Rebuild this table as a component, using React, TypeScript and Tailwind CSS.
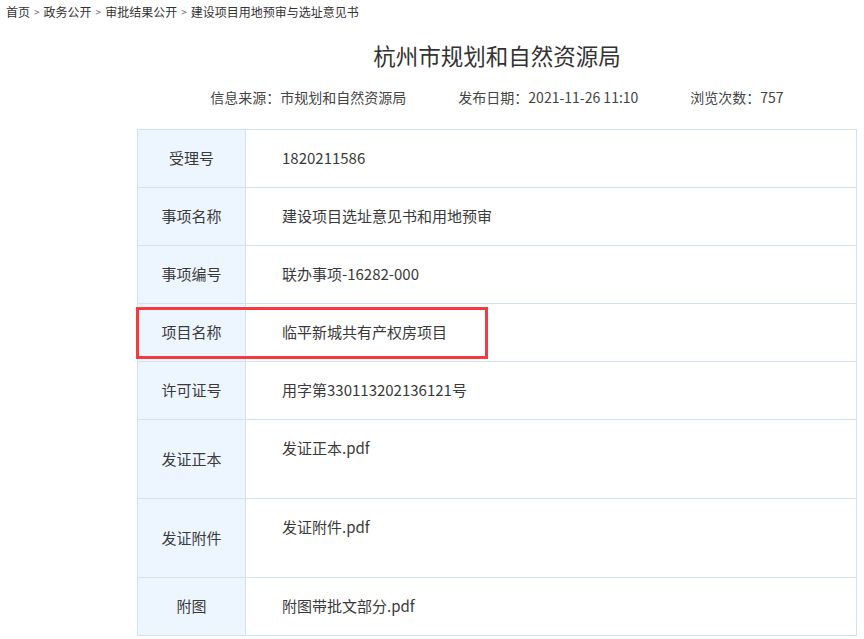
import React from "react";

const font = { fontFamily: '"Microsoft YaHei", "Noto Sans CJK SC", "Noto Sans", sans-serif' };

type Row = { label: string; value: string; tall?: boolean };

const rows: Row[] = [
  { label: "受理号", value: "1820211586" },
  { label: "事项名称", value: "建设项目选址意见书和用地预审" },
  { label: "事项编号", value: "联办事项-16282-000" },
  { label: "项目名称", value: "临平新城共有产权房项目" },
  { label: "许可证号", value: "用字第330113202136121号" },
  { label: "发证正本", value: "发证正本.pdf", tall: true },
  { label: "发证附件", value: "发证附件.pdf", tall: true },
  { label: "附图", value: "附图带批文部分.pdf" },
];

export default function App() {
  return (
    <div className="w-[864px] h-[639px] bg-white overflow-hidden text-[#333]" style={font}>
      <div className="pl-[6px] h-[24px] leading-[24px] text-[12px] text-[#333] flex items-center gap-[4px]">
        <span>首页</span>
        <span className="text-[10px] text-[#666]">&gt;</span>
        <span>政务公开</span>
        <span className="text-[10px] text-[#666]">&gt;</span>
        <span>审批结果公开</span>
        <span className="text-[10px] text-[#666]">&gt;</span>
        <span>建设项目用地预审与选址意见书</span>
      </div>
      <div className="ml-[137px] w-[720px]">
        <h1 className="mt-[16px] text-center text-[22.5px] leading-[30px] text-[#333] font-normal">
          杭州市规划和自然资源局
        </h1>
        <div className="mt-[17px] h-[20px] leading-[20px] text-[14px] text-[#444] flex justify-center gap-[52px]">
          <span>信息来源：市规划和自然资源局</span>
          <span>发布日期：2021-11-26 11:10</span>
          <span>浏览次数：757</span>
        </div>
        <div className="relative mt-[22px] border-t border-l border-[#d3e2ef] text-[15px] text-[#3a3a3a]">
          {rows.map((r) => (
            <div key={r.label} className={`flex ${r.tall ? "h-[79px]" : "h-[58px]"}`}>
              <div className="w-[108px] shrink-0 bg-[#edf6ff] border-r border-b border-[#d3e2ef] flex items-center justify-center">
                {r.label}
              </div>
              <div
                className={`flex-1 border-r border-b border-[#d3e2ef] pl-[36px] flex ${
                  r.tall ? "items-start pt-[17px]" : "items-center"
                }`}
              >
                {r.value}
              </div>
            </div>
          ))}
          <div className="absolute left-[-2px] top-[177px] w-[352px] h-[52px] border-[3px] border-[#f5393d] pointer-events-none" />
        </div>
      </div>
    </div>
  );
}
